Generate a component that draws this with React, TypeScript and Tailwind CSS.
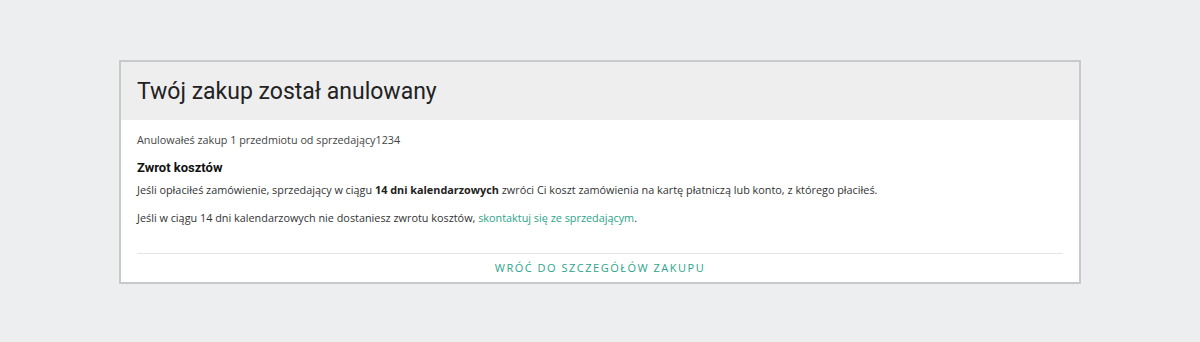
import React from "react";

const App: React.FC = () => {
  return (
    <div className="min-h-[342px] w-full bg-[#eceef0] pt-[60px]">
      <div className="mx-auto w-[962px] border-2 border-[#c8c9ca] bg-white">
        <div className="flex h-[58px] items-center bg-[#eeeeef] px-4 pt-[3px]">
          <h1 className="font-['Roboto',sans-serif] text-[23px] text-[#222]">
            Twój zakup został anulowany
          </h1>
        </div>
        <div className="px-4 pt-[11px] font-['Open_Sans',sans-serif] text-[10.85px] text-[#333]">
          <p className="text-[10.8px] leading-[18px] text-[#444]">
            Anulowałeś zakup 1 przedmiotu od sprzedający1234
          </p>
          <h2 className="mt-[9px] font-['Roboto',sans-serif] text-[13px] font-bold leading-[20px] text-[#111]">
            Zwrot kosztów
          </h2>
          <p className="mt-[3px] leading-[18px]">
            Jeśli opłaciłeś zamówienie, sprzedający w ciągu{" "}
            <strong className="font-bold text-[#222]">14 dni kalendarzowych</strong> zwróci Ci
            koszt zamówienia na kartę płatniczą lub konto, z którego płaciłeś.
          </p>
          <p className="mt-[10px] leading-[18px]">
            Jeśli w ciągu 14 dni kalendarzowych nie dostaniesz zwrotu kosztów,{" "}
            <a className="text-[#2ba48a]" href="#">
              skontaktuj się ze sprzedającym
            </a>
            .
          </p>
          <div className="mt-[26px] border-t border-[#e3e4e5]" />
          <div className="flex h-[28px] items-center justify-center pt-[1px]">
            <a
              href="#"
              className="text-[11px] uppercase tracking-[1.5px] text-[#2ba48a]"
            >
              Wróć do szczegółów zakupu
            </a>
          </div>
        </div>
      </div>
    </div>
  );
};

export default App;
